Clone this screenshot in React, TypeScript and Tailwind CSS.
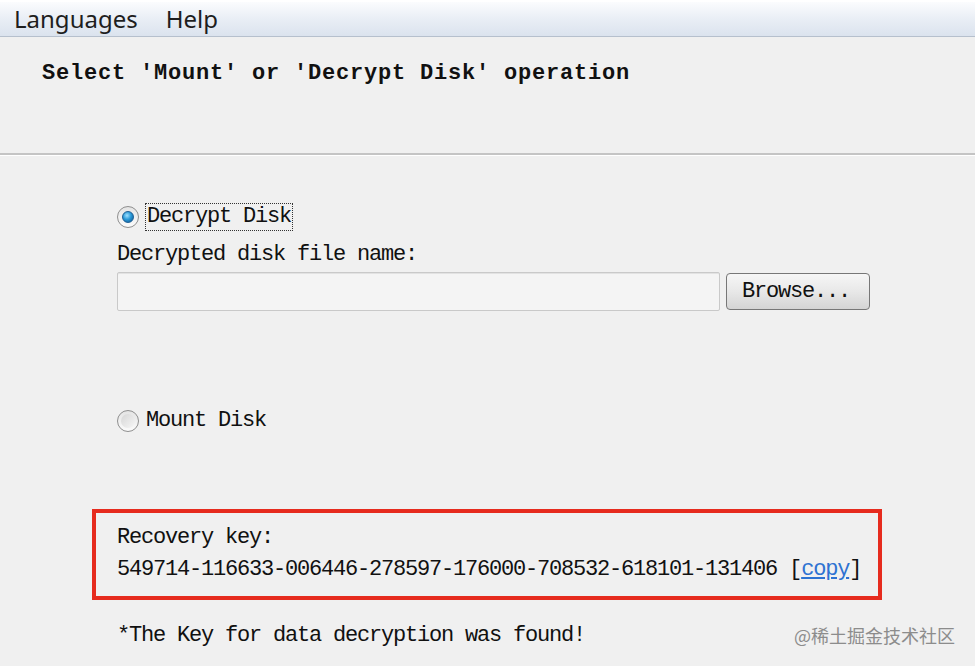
import React from 'react';

const mono = { fontFamily: '"Liberation Mono", "DejaVu Sans Mono", monospace' };
const ui = { fontFamily: '"Noto Sans", "Open Sans", sans-serif' };

function Radio({ checked }: { checked: boolean }) {
    return (
        <div className="w-[22px] h-[22px] rounded-full border border-[#8f8f8f] bg-gradient-to-b from-[#e4e4e4] to-[#fbfbfb] flex items-center justify-center shrink-0">
            {checked ? (
                <div className="w-[12px] h-[12px] rounded-full bg-[radial-gradient(circle_at_40%_35%,#9fe0ff_0%,#2a9ad8_45%,#0b4f8a_100%)] border border-[#1d5f95]" />
            ) : (
                <div className="w-[14px] h-[14px] rounded-full bg-gradient-to-br from-[#d6d6d6] to-[#f6f6f6]" />
            )}
        </div>
    );
}

export default function App() {
    return (
        <div className="relative w-[975px] h-[666px] overflow-hidden bg-[#f0f0f0] flex flex-col text-[#111]">
            {/* Menu bar */}
            <div className="h-[37px] shrink-0 flex items-center gap-[28px] pl-[14px] bg-gradient-to-b from-[#fbfcfe] via-[#e9eef5] to-[#dbe3ee] border-b border-[#b6c0cd] border-t-2 border-t-white">
                <span className="text-[24px] leading-[30px] text-[#1e1e1e]" style={ui}>Languages</span>
                <span className="text-[24px] leading-[30px] text-[#1e1e1e]" style={ui}>Help</span>
            </div>

            {/* Header */}
            <div className="h-[118px] shrink-0 pl-[42px] pt-[23px] border-b-2 border-[#c4c4c4]" style={mono}>
                <div className="text-[22px] leading-[28px] font-bold tracking-[0.8px]">Select 'Mount' or 'Decrypt Disk' operation</div>
            </div>
            <div className="h-px bg-white shrink-0" />

            {/* Body */}
            <div className="flex flex-col pl-[117px]" style={mono}>
                <div className="mt-[46px] h-[30px] flex items-center gap-[6px]">
                    <Radio checked />
                    <span className="border border-dotted border-[#333] px-[1px] text-[22px] leading-[26px] tracking-[-1.2px]">Decrypt Disk</span>
                </div>

                <div className="mt-[11px] text-[22px] leading-[24px] tracking-[-1.2px]">Decrypted disk file name:</div>

                <div className="mt-[5px] flex items-center">
                    <div className="w-[603px] h-[39px] bg-[#f4f4f4] border border-[#c9c9c9] rounded-[2px] shadow-[inset_0_1px_0_#e2e2e2]" />
                    <button className="ml-[6px] w-[144px] h-[37px] rounded-[4px] border border-[#777] bg-gradient-to-b from-[#f6f6f6] via-[#e8e8e8] to-[#d4d4d4] text-[22px] tracking-[-1.2px] text-left pl-[15px]" style={mono}>
                        Browse...
                    </button>
                </div>

                <div className="mt-[95px] h-[30px] flex items-center gap-[7px]">
                    <Radio checked={false} />
                    <span className="text-[22px] leading-[26px] tracking-[-1.2px]">Mount Disk</span>
                </div>

                <div className="mt-[73px] -ml-[25px] w-[790px] border-4 border-[#e62b1e] pl-[21px] pt-[13px] pb-[14px] flex flex-col gap-[8px]">
                    <div className="text-[22px] leading-[24px] tracking-[-1.2px]">Recovery key:</div>
                    <div className="text-[22px] leading-[24px] tracking-[-1.2px]">
                        549714-116633-006446-278597-176000-708532-618101-131406 [<span className="text-[#2d72d2] underline">copy</span>]
                    </div>
                </div>

                <div className="mt-[24px] text-[22px] leading-[24px] tracking-[-1.2px]">*The Key for data decryption was found!</div>
            </div>

            {/* Watermark */}
            <div className="absolute right-[20px] bottom-[17px] text-[18px] text-[#8c8c8c]" style={{ fontFamily: '"Noto Sans CJK SC", "Noto Sans", sans-serif' }}>
                @稀土掘金技术社区
            </div>
        </div>
    );
}
